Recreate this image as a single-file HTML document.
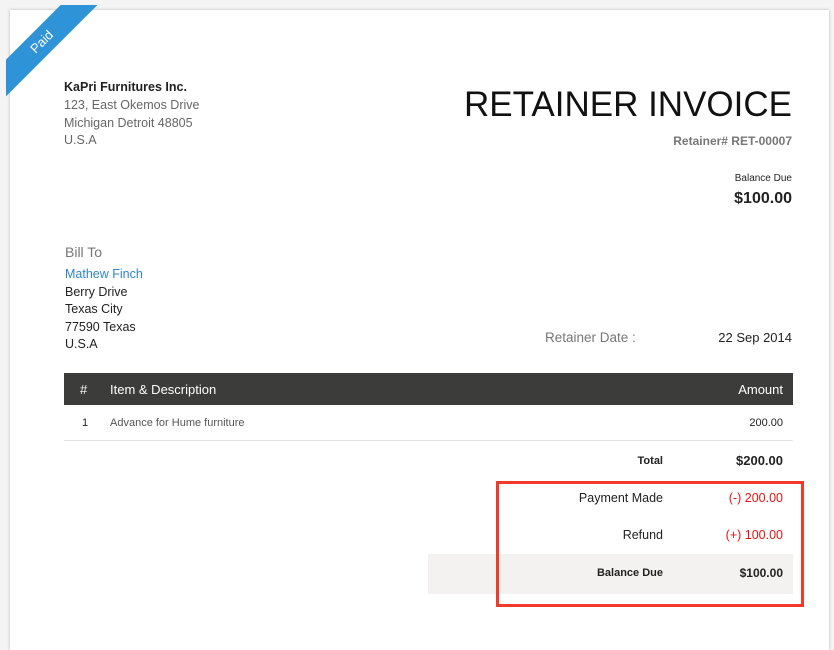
<!DOCTYPE html>
<html><head><style>
body{margin:0;width:834px;height:625px;background:#f4f4f4;font-family:"Liberation Sans",sans-serif;position:relative;overflow:hidden;color:#333}
.card{position:absolute;left:10px;top:10px;width:819px;height:640px;background:#fff;box-shadow:0 0 3px rgba(0,0,0,.25)}
.rw{position:absolute;left:6px;top:5px;width:100px;height:100px;overflow:hidden}
.rib{position:absolute;left:-29px;top:24px;width:130px;height:26px;background:#2f93d8;transform:rotate(-45deg);color:#fff;font-size:13px;text-align:center;line-height:26px}
.a{position:absolute;white-space:nowrap}
</style></head><body>
<div class="card"></div>
<div class="rw"><div class="rib">Paid</div></div>
<div class="a" style="left:64px;top:80px;font-size:12.5px;font-weight:bold;color:#222">KaPri Furnitures Inc.</div>
<div class="a" style="left:64px;top:97px;font-size:12.5px;line-height:17.5px;color:#666">123, East Okemos Drive<br>Michigan Detroit 48805<br>U.S.A</div>
<div class="a" style="right:42px;top:85px;font-size:35px;color:#111">RETAINER INVOICE</div>
<div class="a" style="right:42px;top:134px;font-size:12px;font-weight:bold;color:#777">Retainer# RET-00007</div>
<div class="a" style="right:42px;top:173px;font-size:10px;color:#222">Balance Due</div>
<div class="a" style="right:42px;top:190px;font-size:16px;font-weight:bold;color:#222">$100.00</div>
<div class="a" style="left:65px;top:244px;font-size:14px;color:#777">Bill To</div>
<div class="a" style="left:65px;top:266px;font-size:12.5px;line-height:17.5px;color:#222"><span style="color:#2f86c8">Mathew Finch</span><br>Berry Drive<br>Texas City<br>77590 Texas<br>U.S.A</div>
<div class="a" style="left:545px;top:330px;font-size:13.5px;color:#777">Retainer Date :</div>
<div class="a" style="right:42px;top:330px;font-size:13px;color:#222">22 Sep 2014</div>
<div class="a" style="left:64px;top:373px;width:729px;height:32px;background:#3c3c3b"></div>
<div class="a" style="left:80px;top:382px;font-size:13px;color:#fff">#</div>
<div class="a" style="left:110px;top:382px;font-size:13px;color:#fff">Item &amp; Description</div>
<div class="a" style="right:51px;top:382px;font-size:13px;color:#fff">Amount</div>
<div class="a" style="left:82px;top:417px;font-size:11px;color:#222">1</div>
<div class="a" style="left:110px;top:417px;font-size:11px;color:#555">Advance for Hume furniture</div>
<div class="a" style="right:51px;top:417px;font-size:11px;color:#222">200.00</div>
<div class="a" style="left:64px;top:440px;width:729px;height:1px;background:#e2e2e2"></div>
<div class="a" style="right:171px;top:455px;font-size:11px;font-weight:bold;color:#222">Total</div>
<div class="a" style="right:51px;top:453px;font-size:13px;font-weight:bold;color:#222">$200.00</div>
<div class="a" style="right:171px;top:491px;font-size:12.5px;color:#222">Payment Made</div>
<div class="a" style="right:51px;top:491px;font-size:12.5px;color:#f01010">(-) 200.00</div>
<div class="a" style="right:171px;top:528px;font-size:12.5px;color:#222">Refund</div>
<div class="a" style="right:51px;top:528px;font-size:12.5px;color:#f01010">(+) 100.00</div>
<div class="a" style="left:428px;top:554px;width:365px;height:40px;background:#f3f2f0"></div>
<div class="a" style="right:171px;top:567px;font-size:11px;font-weight:bold;color:#222">Balance Due</div>
<div class="a" style="right:51px;top:566px;font-size:12px;font-weight:bold;color:#222">$100.00</div>
<div class="a" style="left:496px;top:481px;width:302px;height:120px;border:3px solid #f23a2a"></div>
</body></html>
